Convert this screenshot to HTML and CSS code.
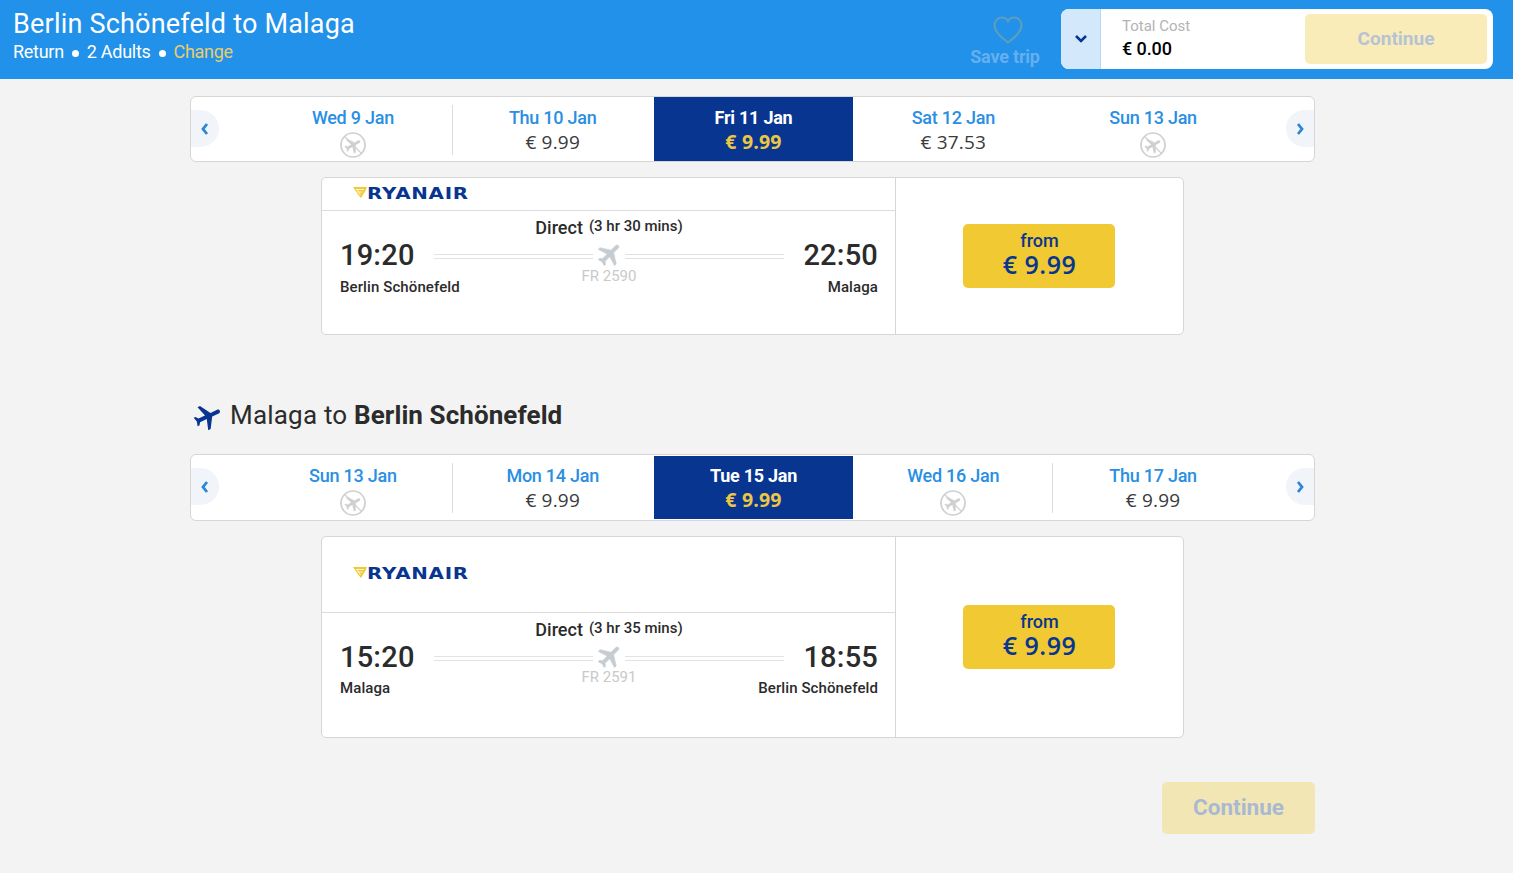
FILE: index.html
```html
<!DOCTYPE html>
<html lang="en">
<head>
<meta charset="utf-8">
<title>Berlin Schönefeld to Malaga</title>
<link rel="stylesheet" href="styles.css">
</head>
<body>
<svg class="defs" width="0" height="0" aria-hidden="true">
  <defs>
    <path id="flight" d="M21 16v-2l-8-5V3.500c0-.83-.67-1.500-1.500-1.500S10 2.670 10 3.500V9l-8 5v2l8-2.500V19l-2 1.500V22l3.500-1 3.500 1v-1.500L13 19v-5.500l8 2.500z"/>
    <g id="noflight">
      <circle cx="13" cy="13" r="12" fill="none" stroke="currentColor" stroke-width="1.700"/>
      <path transform="translate(13 13) rotate(60) scale(.8) translate(-11.500 -12)" fill="currentColor" stroke="currentColor" stroke-width=".5" d="M21 16v-2l-8-5V3.500c0-.83-.67-1.500-1.500-1.500S10 2.670 10 3.500V9l-8 5v2l8-2.500V19l-2 1.500V22l3.500-1 3.500 1v-1.500L13 19v-5.500l8 2.500z"/>
      <path d="M4.500 4.500 21.500 21.500" stroke="currentColor" stroke-width="1.100"/>
    </g>
    <g id="logo-mark">
      <path d="M0 0h14l-1.500 3.500L8 11 5.500 8z" fill="#f1c933"/>
      <path d="M3 2.500h8M4.500 5h5M4 2.500 7.500 8" stroke="#fff" stroke-width=".8" fill="none"/>
    </g>
  </defs>
</svg>

<header class="topbar">
  <div class="trip">
    <h1 class="trip-title">Berlin Schönefeld to Malaga</h1>
    <div class="trip-meta">
      <span>Return</span><i class="dot"></i><span>2 Adults</span><i class="dot"></i><span class="change">Change</span>
    </div>
  </div>
  <div class="save">
    <svg class="heart" viewBox="0 0 30 28" width="30" height="28"><path d="M15 26.500C6 19.500 1.500 15 1.500 9.200 1.500 4.800 4.800 1.500 8.800 1.500c2.600 0 4.900 1.300 6.200 3.700 1.300-2.400 3.600-3.700 6.200-3.700 4 0 7.300 3.300 7.300 7.700 0 5.800-4.500 10.300-13.500 17.300z" fill="none" stroke="currentColor" stroke-width="2.200"/></svg>
    <span class="save-label">Save trip</span>
  </div>
  <div class="cost">
    <div class="cost-toggle">
      <svg viewBox="0 0 14 10" width="14" height="10"><path d="M2 2l5 5 5-5" fill="none" stroke="#073590" stroke-width="2.600"/></svg>
    </div>
    <div class="cost-text">
      <span class="cost-label">Total Cost</span>
      <span class="cost-value">€ 0.00</span>
    </div>
    <button class="btn-continue btn-top">Continue</button>
  </div>
</header>

<main class="page">
  <section class="strip">
    <button class="arrow arrow-left"><svg viewBox="0 0 10 14" width="10" height="14"><path d="M7 2 3 7l4 5" fill="none" stroke="currentColor" stroke-width="2.800"/></svg></button>
    <div class="day sep"><span class="day-name">Wed 9 Jan</span><svg class="noflight" viewBox="0 0 26 26" width="26" height="26"><use href="#noflight"/></svg></div>
    <div class="day"><span class="day-name">Thu 10 Jan</span><span class="day-price">€ 9.99</span></div>
    <div class="day selected"><span class="day-name">Fri 11 Jan</span><span class="day-price">€ 9.99</span></div>
    <div class="day"><span class="day-name">Sat 12 Jan</span><span class="day-price">€ 37.53</span></div>
    <div class="day"><span class="day-name">Sun 13 Jan</span><svg class="noflight" viewBox="0 0 26 26" width="26" height="26"><use href="#noflight"/></svg></div>
    <button class="arrow arrow-right"><svg viewBox="0 0 10 14" width="10" height="14"><path d="M3 2l4 5-4 5" fill="none" stroke="currentColor" stroke-width="2.800"/></svg></button>
  </section>

  <article class="card">
    <div class="flight">
      <div class="carrier carrier-short">
        <svg class="mark" viewBox="0 0 14 11" width="14" height="11"><use href="#logo-mark"/></svg><span class="wordmark">RYANAIR</span>
      </div>
      <div class="route">
        <div class="end">
          <span class="time">19:20</span>
          <span class="place">Berlin Schönefeld</span>
        </div>
        <div class="mid">
          <div class="direct"><b>Direct</b><span>(3 hr 30 mins)</span></div>
          <div class="track"><svg viewBox="0 0 24 24" width="32" height="29"><use href="#flight" transform="translate(1 0) rotate(45 12 12)"/></svg></div>
          <span class="code">FR 2590</span>
        </div>
        <div class="end end-right">
          <span class="time">22:50</span>
          <span class="place">Malaga</span>
        </div>
      </div>
    </div>
    <div class="fare">
      <button class="price-btn"><span class="from">from</span><span class="amount">€ 9.99</span></button>
    </div>
  </article>

  <h2 class="leg-title">
    <svg viewBox="0 0 24 24" width="32" height="32"><use href="#flight" transform="rotate(65 12 12)"/></svg>
    <span class="leg-text">Malaga to <b>Berlin Schönefeld</b></span>
  </h2>

  <section class="strip strip-tall">
    <button class="arrow arrow-left"><svg viewBox="0 0 10 14" width="10" height="14"><path d="M7 2 3 7l4 5" fill="none" stroke="currentColor" stroke-width="2.800"/></svg></button>
    <div class="day sep"><span class="day-name">Sun 13 Jan</span><svg class="noflight" viewBox="0 0 26 26" width="26" height="26"><use href="#noflight"/></svg></div>
    <div class="day"><span class="day-name">Mon 14 Jan</span><span class="day-price">€ 9.99</span></div>
    <div class="day selected"><span class="day-name">Tue 15 Jan</span><span class="day-price">€ 9.99</span></div>
    <div class="day sep"><span class="day-name">Wed 16 Jan</span><svg class="noflight" viewBox="0 0 26 26" width="26" height="26"><use href="#noflight"/></svg></div>
    <div class="day"><span class="day-name">Thu 17 Jan</span><span class="day-price">€ 9.99</span></div>
    <button class="arrow arrow-right"><svg viewBox="0 0 10 14" width="10" height="14"><path d="M3 2l4 5-4 5" fill="none" stroke="currentColor" stroke-width="2.800"/></svg></button>
  </section>

  <article class="card card-tall">
    <div class="flight">
      <div class="carrier carrier-tall">
        <svg class="mark" viewBox="0 0 14 11" width="14" height="11"><use href="#logo-mark"/></svg><span class="wordmark">RYANAIR</span>
      </div>
      <div class="route">
        <div class="end">
          <span class="time">15:20</span>
          <span class="place">Malaga</span>
        </div>
        <div class="mid">
          <div class="direct"><b>Direct</b><span>(3 hr 35 mins)</span></div>
          <div class="track"><svg viewBox="0 0 24 24" width="32" height="29"><use href="#flight" transform="translate(1 0) rotate(45 12 12)"/></svg></div>
          <span class="code">FR 2591</span>
        </div>
        <div class="end end-right">
          <span class="time">18:55</span>
          <span class="place">Berlin Schönefeld</span>
        </div>
      </div>
    </div>
    <div class="fare">
      <button class="price-btn"><span class="from">from</span><span class="amount">€ 9.99</span></button>
    </div>
  </article>

  <div class="actions">
    <button class="btn-continue btn-bottom">Continue</button>
  </div>
</main>
</body>
</html>
```

FILE: styles.css
```css
* { box-sizing: border-box; }

html, body { margin: 0; padding: 0; }

body {
  background: #f3f3f3;
  color: #2b2b2b;
  font-family: Roboto, "Liberation Sans", sans-serif;
  height: 873px;
  overflow: hidden;
}

.defs { display: block; height: 0; }

button { font-family: inherit; border: 0; padding: 0; }

/* top bar */
.topbar {
  height: 79px;
  background: #2191e9;
  display: flex;
  align-items: flex-start;
  padding: 9px 20px 0 13px;
  color: #fff;
}

.trip { flex: 1; }

.trip-title {
  margin: 0;
  font-size: 27px;
  line-height: 30px;
  font-weight: 400;
  letter-spacing: 0.2px;
}

.trip-meta {
  display: flex;
  align-items: center;
  font-size: 18px;
  line-height: 24px;
  margin-top: 1px;
  letter-spacing: -0.28px;
}

.dot {
  width: 7px;
  height: 7px;
  border-radius: 50%;
  background: #fff;
  margin: 2px 8px 0;
}

.change { color: #e8cd6e; }

.save {
  width: 72px;
  margin-right: 20px;
  margin-top: 7px;
  display: flex;
  flex-direction: column;
  align-items: center;
  color: #64b0ef;
}

.heart { color: #5c9fbb; margin-left: 5px; }

.save-label {
  font-size: 18px;
  line-height: 22px;
  font-weight: 700;
  letter-spacing: -0.2px;
  white-space: nowrap;
  margin-top: 2px;
}

.cost {
  width: 432px;
  height: 60px;
  background: #fff;
  border-radius: 8px;
  display: flex;
  align-items: center;
  overflow: hidden;
}

.cost-toggle {
  width: 40px;
  height: 60px;
  background: #d3e9fb;
  border-right: 1px solid #b9d6ef;
  display: flex;
  align-items: center;
  justify-content: center;
}

.cost-text {
  flex: 1;
  display: flex;
  flex-direction: column;
  padding-left: 21px;
}

.cost-label { font-size: 15px; line-height: 20px; color: #b3b3b3; }

.cost-value { font-size: 18px; line-height: 26px; font-weight: 500; color: #000; letter-spacing: -0.1px; }

.btn-continue {
  border-radius: 5px;
  font-weight: 700;
  padding-bottom: 2px;
}

.btn-top {
  width: 182px;
  height: 50px;
  margin-right: 6px;
  background: #f9ecb8;
  color: #b5c3d4;
  font-size: 19px;
}

/* page */
.page {
  width: 1125px;
  margin: 17px auto 0 190px;
}

.strip {
  position: relative;
  height: 66px;
  background: #fff;
  border: 1px solid #d6d6d6;
  border-radius: 6px;
  display: flex;
  padding: 0 61px 0 62px;
}

.strip-tall { height: 67px; }

.arrow {
  position: absolute;
  top: 13px;
  width: 28px;
  height: 37px;
  background: #f1f4f8;
  color: #2a86d8;
  display: flex;
  align-items: center;
  justify-content: center;
  padding: 0;
}

.arrow-left { left: 0; border-radius: 0 19px 19px 0; }
.arrow-right { right: 0; border-radius: 19px 0 0 19px; }

.day {
  position: relative;
  flex: 1;
  display: flex;
  flex-direction: column;
  align-items: center;
  padding-top: 9px;
}

.day.sep::after {
  content: "";
  position: absolute;
  right: 0;
  top: 8px;
  height: 50px;
  border-right: 1px solid #dcdcdc;
}

.day-name {
  font-size: 18px;
  line-height: 24px;
  font-weight: 500;
  letter-spacing: -0.25px;
  color: #2a8fe3;
}

.day-price {
  font-family: "Open Sans", sans-serif;
  font-size: 19px;
  line-height: 26px;
  letter-spacing: 0.2px;
  color: #3a3a3a;
  margin-top: -1px;
}

.noflight { color: #cfcfcf; margin-top: 2px; }

.selected {
  background: #073590;
  border-left: 1px solid #fff;
}

.strip-tall .selected {
  margin-top: 1px;
  margin-bottom: 1px;
  padding-top: 8px;
}

.selected .day-name { color: #fff; font-weight: 700; }
.selected .day-price { color: #ecc745; font-weight: 700; font-size: 19.500px; letter-spacing: 0.2px; }

/* flight card */
.card {
  width: 863px;
  margin: 15px 0 0 131px;
  background: #fff;
  border: 1px solid #d6d6d6;
  border-radius: 5px;
  display: flex;
}

.flight {
  width: 573px;
  border-right: 1px solid #d6d6d6;
  box-sizing: content-box;
}

.carrier {
  display: flex;
  align-items: center;
  padding-left: 31px;
  border-bottom: 1px solid #dcdcdc;
}

.carrier-short { height: 33px; }
.carrier-tall { height: 76px; padding-bottom: 2px; }

.mark { margin-top: -3px; }

.wordmark {
  font-family: "DejaVu Sans", sans-serif;
  font-size: 16px;
  line-height: 20px;
  font-weight: 700;
  color: #073590;
  letter-spacing: 0.6px;
  transform: scaleX(1.24);
  transform-origin: left center;
}

.route {
  display: flex;
  height: 123px;
  padding: 0 17px 0 18px;
}

.card-tall .route { height: 124px; }

.end {
  width: 94px;
  display: flex;
  flex-direction: column;
  white-space: nowrap;
  padding-top: 25px;
}

.end-right { align-items: flex-end; }

.time {
  font-size: 29px;
  line-height: 38px;
  font-weight: 500;
  letter-spacing: 0.2px;
}

.place {
  font-size: 15px;
  line-height: 20px;
  font-weight: 500;
  letter-spacing: 0.1px;
  margin-top: 3px;
}

.card-tall .place { margin-top: 2px; }

.mid {
  flex: 1;
  display: flex;
  flex-direction: column;
  align-items: center;
  padding-top: 4px;
}

.direct {
  display: flex;
  align-items: flex-start;
  gap: 6px;
  height: 26px;
}

.direct b { font-size: 18px; line-height: 26px; font-weight: 500; }
.direct span { font-size: 15px; line-height: 22px; font-weight: 500; }

.track {
  align-self: stretch;
  height: 6px;
  margin-top: 12px;
  position: relative;
  display: flex;
  justify-content: center;
  align-items: center;
}

.track::before {
  content: "";
  position: absolute;
  left: 0;
  right: 0;
  top: 1px;
  height: 3px;
  border-top: 1px solid #e2e2e2;
  border-bottom: 1px solid #e2e2e2;
}

.track svg {
  position: relative;
  top: -2px;
  fill: #c7ccd0;
  stroke: #c7ccd0;
  stroke-width: 0.5;
  background: #fff;
  padding: 0 1.500px;
  flex: none;
}

.code {
  font-size: 15px;
  line-height: 20px;
  color: #c9c9c9;
  margin-top: 7px;
}

.card-tall .code { margin-top: 6px; }

.fare {
  flex: 1;
  display: flex;
  align-items: center;
  justify-content: center;
  padding-right: 2px;
}

.price-btn {
  width: 152px;
  height: 64px;
  background: #f1c933;
  border-radius: 5px;
  color: #073590;
  display: flex;
  flex-direction: column;
  align-items: center;
  padding: 7px 0 0 2px;
}

.from { font-size: 18px; line-height: 20px; font-weight: 500; }

.amount {
  font-family: "Open Sans", sans-serif;
  font-size: 25px;
  line-height: 26px;
  font-weight: 600;
  letter-spacing: 0.5px;
}

/* return leg */
.leg-title {
  margin: 62px 0 21px 2px;
  height: 36px;
  display: flex;
  align-items: center;
  gap: 6px;
  font-size: 26px;
  font-weight: 400;
  line-height: 36px;
  color: #2b2b2b;
}

.leg-title svg { fill: #073590; flex: none; margin: 3px 0 0 0; }
.leg-text { letter-spacing: 0.2px; }
.leg-title b { font-weight: 700; letter-spacing: 0.08px; }

.actions {
  display: flex;
  justify-content: flex-end;
  margin-top: 44px;
}

.btn-bottom {
  width: 153px;
  height: 52px;
  background: #f3e6b5;
  color: #a9b9d2;
  font-size: 22.500px;
  font-weight: 700;
}
```
